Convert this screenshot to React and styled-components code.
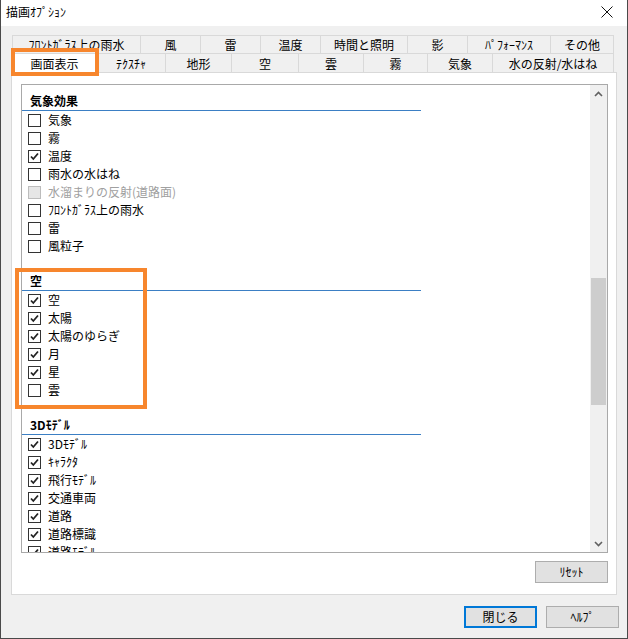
import React from "react"
import styled, { createGlobalStyle } from "styled-components"

const GlobalStyle = createGlobalStyle`
  html, body {
    margin: 0;
    padding: 0;
    background: #ffffff;
  }
  * {
    box-sizing: border-box;
  }
`

const FONT = `"Noto Sans CJK JP", "Noto Sans", "Liberation Sans", sans-serif`

const Window = styled.div`
  position: relative;
  width: 628px;
  height: 639px;
  border: 1px solid #4a4a4a;
  border-top: none;
  background: #f0f0f0;
  font-family: ${FONT};
  font-size: 12px;
  color: #000;
  display: flex;
  flex-direction: column;
  overflow: hidden;
`

const TitleBar = styled.div`
  height: 26px;
  background: #ffffff;
  display: flex;
  align-items: center;
  justify-content: space-between;
  padding: 0 12px 2px 5px;
`

const Title = styled.span`
  font-size: 12px;
  line-height: 14px;
`

const CloseButton = styled.span`
  display: flex;
  width: 12px;
  height: 12px;
  margin-right: 2px;
`

const Body = styled.div`
  flex: 1;
  display: flex;
  flex-direction: column;
  padding: 9px 8px 0 9px;
`

const TabStrip = styled.div`
  margin-left: 2px;
  display: flex;
  flex-direction: column;
`

const TabRow = styled.div`
  display: flex;
  height: ${(p) => p.$h}px;
`

const Tab = styled.div`
  width: ${(p) => p.$w}px;
  height: 100%;
  display: flex;
  align-items: center;
  justify-content: center;
  border-top: 1px solid #d9d9d9;
  border-left: 1px solid #d9d9d9;
  &:last-child {
    border-right: 1px solid #d9d9d9;
  }
  background: ${(p) => (p.$active ? "#ffffff" : "#f0f0f0")};
  line-height: 14px;
  white-space: nowrap;
  padding-top: 1px;
`

const Panel = styled.div`
  width: 606px;
  height: 523px;
  background: #ffffff;
  border: 1px solid #d9d9d9;
  margin-left: 1px;
  padding: 11px 8px 0 9px;
  display: flex;
  flex-direction: column;
`

const ListBox = styled.div`
  height: 469px;
  border: 1px solid #a9a9a9;
  display: flex;
  overflow: hidden;
`

const ListContent = styled.div`
  flex: 1;
  padding-top: 7px;
  overflow: hidden;
`

const Section = styled.div`
  width: 399px;
  margin-bottom: 17px;
`

const SectionHeading = styled.div`
  height: 19px;
  border-bottom: 1px solid #3b7fc4;
  padding-left: 8px;
  font-weight: bold;
  line-height: 18px;
  display: flex;
  align-items: center;
`

const Item = styled.div`
  height: 18px;
  display: flex;
  align-items: center;
  padding-left: 6px;
  gap: 7px;
  color: ${(p) => (p.$disabled ? "#a0a0a0" : "#000")};
  line-height: 14px;
  white-space: nowrap;
`

const Box = styled.span`
  width: 13px;
  height: 13px;
  flex: none;
  border: 1px solid ${(p) => (p.$disabled ? "#bcbcbc" : "#333333")};
  background: ${(p) => (p.$disabled ? "#e6e6e6" : "#ffffff")};
  display: flex;
  align-items: center;
  justify-content: center;
`

const ScrollBar = styled.div`
  width: 17px;
  flex: none;
  background: #f0f0f0;
  display: flex;
  flex-direction: column;
`

const ScrollArrow = styled.div`
  height: 17px;
  display: flex;
  align-items: center;
  justify-content: center;
`

const ScrollTrack = styled.div`
  flex: 1;
  padding: 176px 1px 0 1px;
`

const Thumb = styled.div`
  height: 127px;
  background: #cdcdcd;
`

const ButtonRow = styled.div`
  display: flex;
  justify-content: flex-end;
  gap: 9px;
  margin-top: ${(p) => p.$mt}px;
  padding-right: ${(p) => p.$pr}px;
`

const Button = styled.button`
  width: 73px;
  height: 22px;
  font-family: ${FONT};
  font-size: 12px;
  line-height: 14px;
  color: #000;
  background: #e1e1e1;
  border: ${(p) => (p.$default ? "2px solid #0078d7" : "1px solid #adadad")};
  padding: 0;
  display: flex;
  align-items: center;
  justify-content: center;
`

const Highlight = styled.div`
  position: absolute;
  border: 4px solid #f7862d;
  pointer-events: none;
`

const Check = () => (
  <svg width="11" height="11" viewBox="0 0 11 11">
    <path d="M2 5.5 L4.3 8 L9 2.5" fill="none" stroke="#222" strokeWidth="1.8" />
  </svg>
)

const sections = [
  {
    title: "気象効果",
    items: [
      ["気象", false],
      ["霧", false],
      ["温度", true],
      ["雨水の水はね", false],
      ["水溜まりの反射(道路面)", false, true],
      ["ﾌﾛﾝﾄｶﾞﾗｽ上の雨水", false],
      ["雷", false],
      ["風粒子", false],
    ],
  },
  {
    title: "空",
    items: [
      ["空", true],
      ["太陽", true],
      ["太陽のゆらぎ", true],
      ["月", true],
      ["星", true],
      ["雲", false],
    ],
  },
  {
    title: "3Dﾓﾃﾞﾙ",
    items: [
      ["3Dﾓﾃﾞﾙ", true],
      ["ｷｬﾗｸﾀ", true],
      ["飛行ﾓﾃﾞﾙ", true],
      ["交通車両", true],
      ["道路", true],
      ["道路標識", true],
      ["道路ﾓﾃﾞﾙ", true],
    ],
  },
]

const topTabs = [
  ["ﾌﾛﾝﾄｶﾞﾗｽ上の雨水", 128],
  ["風", 60],
  ["雷", 60],
  ["温度", 60],
  ["時間と照明", 87],
  ["影", 60],
  ["ﾊﾟﾌｫｰﾏﾝｽ", 83],
  ["その他", 64],
]

const frontTabs = [
  ["画面表示", 84],
  ["ﾃｸｽﾁｬ", 69],
  ["地形", 66],
  ["空", 67],
  ["雲", 65],
  ["霧", 64],
  ["気象", 65],
  ["水の反射/水はね", 122],
]

export default function App() {
  return (
    <>
      <GlobalStyle />
      <Window>
        <TitleBar>
          <Title>描画ｵﾌﾟｼｮﾝ</Title>
          <CloseButton>
            <svg width="12" height="12" viewBox="0 0 12 12">
              <path d="M0.5 0.5 L11.5 11.5 M11.5 0.5 L0.5 11.5" stroke="#111" strokeWidth="1" />
            </svg>
          </CloseButton>
        </TitleBar>
        <Body>
          <TabStrip>
            <TabRow $h={18}>
              {topTabs.map(([label, w]) => (
                <Tab key={label} $w={w}>{label}</Tab>
              ))}
            </TabRow>
            <TabRow $h={19}>
              {frontTabs.map(([label, w], i) => (
                <Tab key={label} $w={w} $active={i === 0}>{label}</Tab>
              ))}
            </TabRow>
          </TabStrip>
          <Panel>
            <ListBox>
              <ListContent>
                {sections.map((s) => (
                  <Section key={s.title}>
                    <SectionHeading>{s.title}</SectionHeading>
                    {s.items.map(([label, checked, disabled]) => (
                      <Item key={label} $disabled={disabled}>
                        <Box $disabled={disabled}>{checked && <Check />}</Box>
                        {label}
                      </Item>
                    ))}
                  </Section>
                ))}
              </ListContent>
              <ScrollBar>
                <ScrollArrow>
                  <svg width="9" height="6" viewBox="0 0 9 6">
                    <path d="M1 5 L4.5 1.5 L8 5" fill="none" stroke="#606060" strokeWidth="1.6" />
                  </svg>
                </ScrollArrow>
                <ScrollTrack>
                  <Thumb />
                </ScrollTrack>
                <ScrollArrow>
                  <svg width="9" height="6" viewBox="0 0 9 6">
                    <path d="M1 1 L4.5 4.5 L8 1" fill="none" stroke="#606060" strokeWidth="1.6" />
                  </svg>
                </ScrollArrow>
              </ScrollBar>
            </ListBox>
            <ButtonRow $mt={8} $pr={0}>
              <Button>ﾘｾｯﾄ</Button>
            </ButtonRow>
          </Panel>
          <ButtonRow $mt={11} $pr={0}>
            <Button $default>閉じる</Button>
            <Button>ﾍﾙﾌﾟ</Button>
          </ButtonRow>
        </Body>
        <Highlight style={{ left: 10, top: 48, width: 88, height: 28 }} />
        <Highlight style={{ left: 14, top: 268, width: 132, height: 141 }} />
      </Window>
    </>
  )
}
